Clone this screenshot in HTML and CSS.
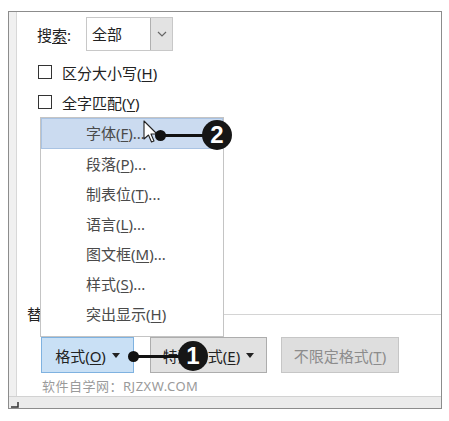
FILE: index.html
```html
<!DOCTYPE html>
<html lang="zh-CN">
<head>
    <meta charset="UTF-8">
    <title>查找和替换</title>
    <link rel="stylesheet" href="styles.css">
</head>
<body>

    <div class="frame">
        <div class="dialog">
            <div class="gutter"></div>
            <div class="content">
                <div class="search-row">
                    <span class="label">搜<u>索</u>:</span>
                    <div class="select">
                        <span class="select__value">全部</span>
                        <span class="select__btn">
                            <svg width="10" height="6" viewBox="0 0 10 6"><path d="M1 1 L5 5 L9 1" fill="none" stroke="#666" stroke-width="1.2"/></svg>
                        </span>
                    </div>
                </div>

                <label class="check-row"><span class="box"></span><span>区分大小写(<u>H</u>)</span></label>
                <label class="check-row"><span class="box"></span><span>全字匹配(<u>Y</u>)</span></label>

                <div class="group-head">
                    <span>替换</span>
                    <span class="group-line"></span>
                </div>

                <div class="btn-row">
                    <button class="btn btn--active"><span>格式(<u>O</u>)</span><span class="caret"></span></button>
                    <button class="btn btn--special"><span>特殊格式(<u>E</u>)</span><span class="caret"></span></button>
                    <button class="btn btn--disabled"><span>不限定格式(<u>T</u>)</span></button>
                </div>

                <div class="watermark">软件自学网：RJZXW.COM</div>
            </div>
        </div>
        <div class="status">
            <svg width="9" height="6" viewBox="0 0 9 6"><path d="M1 5 H8 V0" fill="none" stroke="#333" stroke-width="1.5"/></svg>
        </div>

        <!-- format dropdown menu -->
        <ul class="menu">
            <li class="menu__item menu__item--hover">字体(<u>F</u>)...</li>
            <li class="menu__item">段落(<u>P</u>)...</li>
            <li class="menu__item">制表位(<u>T</u>)...</li>
            <li class="menu__item">语言(<u>L</u>)...</li>
            <li class="menu__item">图文框(<u>M</u>)...</li>
            <li class="menu__item">样式(<u>S</u>)...</li>
            <li class="menu__item">突出显示(<u>H</u>)</li>
        </ul>

        <svg class="cursor" width="16" height="24" viewBox="0 0 16 24">
            <path d="M1 1 L1 19 L5.5 15 L8.5 22 L11 21 L8 14 L14 14 Z" fill="#fff" stroke="#222" stroke-width="1.1" stroke-linejoin="round"/>
        </svg>

        <div class="callout callout--two">
            <span class="callout__dot"></span>
            <span class="callout__line"></span>
            <span class="callout__num">2</span>
        </div>
        <div class="callout callout--one">
            <span class="callout__dot"></span>
            <span class="callout__line"></span>
            <span class="callout__num">1</span>
        </div>
    </div>

</body>
</html>
```

FILE: styles.css
```css
body {
    margin: 0;
    background: #fff;
    font-family: "Noto Sans", "Noto Sans CJK SC", sans-serif;
    font-size: 15px;
    color: #222;
}

u {
    text-underline-offset: 2px;
}

.frame {
    position: relative;
    margin: 11px 0 0 8px;
    width: 432px;
    height: 396px;
    border: 1px solid #8c8c8c;
    display: flex;
    flex-direction: column;
}

.dialog {
    flex: 1;
    display: flex;
}

.gutter {
    width: 7px;
    background: #f0f0f0;
    border-right: 1px solid #d8d8d8;
}

.content {
    flex: 1;
    background: #fff;
    display: flex;
    flex-direction: column;
    padding-left: 20px;
}

.search-row {
    display: flex;
    align-items: center;
    margin-top: 4px;
    height: 36px;
}

.label {
    width: 49px;
}

.select {
    display: flex;
    height: 34px;
    border: 1px solid #c8c8c8;
    box-sizing: border-box;
}

.select__value {
    width: 58px;
    padding-left: 5px;
    line-height: 32px;
}

.select__btn {
    width: 21px;
    background: #e3e3e3;
    border-left: 1px solid #b0b0b0;
    display: flex;
    align-items: center;
    justify-content: center;
}

.check-row {
    display: flex;
    align-items: center;
    height: 30px;
    margin-left: 1px;
}

.search-row + .check-row {
    margin-top: 5px;
}

.box {
    width: 12px;
    height: 12px;
    border: 1px solid #333;
    background: #fff;
    margin-right: 10px;
}

.group-head {
    display: flex;
    align-items: center;
    margin-top: 189px;
    margin-left: -10px;
    height: 16px;
    line-height: 16px;
}

.group-line {
    flex: 1;
    height: 1px;
    background: #d4d4d4;
    margin-left: 6px;
}

.btn-row {
    display: flex;
    margin-top: 15px;
    margin-left: 4px;
    height: 36px;
}

.btn {
    font-family: inherit;
    font-size: 15px;
    color: #222;
    height: 36px;
    padding: 0;
    box-sizing: border-box;
    background: #e1e1e1;
    border: 1px solid #adadad;
    display: flex;
    align-items: center;
    justify-content: center;
    gap: 6px;
}

.btn--active {
    width: 93px;
    background: #c9e0f5;
    border-color: #7fb2e0;
}

.btn--special {
    width: 117px;
    margin-left: 16px;
}

.btn--disabled {
    width: 118px;
    margin-left: 14px;
    background: #dedede;
    border-color: #c6c6c6;
    color: #8c8c8c;
}

.caret {
    width: 0;
    height: 0;
    border-left: 4px solid transparent;
    border-right: 4px solid transparent;
    border-top: 5px solid #222;
}

.watermark {
    margin-top: 5px;
    margin-left: 5px;
    font-size: 13px;
    line-height: 16px;
    color: #9a9a9a;
    letter-spacing: 0.5px;
}

.status {
    height: 11px;
    background: #ebebeb;
    border-top: 1px solid #d2d2d2;
    display: flex;
    align-items: flex-end;
    padding-left: 1px;
}

.menu {
    position: absolute;
    left: 31px;
    top: 105px;
    width: 182px;
    height: 218px;
    margin: 0;
    padding: 0;
    list-style: none;
    background: #fff;
    border: 1px solid #c4c4c4;
}

.menu__item {
    height: 30px;
    line-height: 30px;
    padding-left: 45px;
    color: #4a4a4a;
    box-sizing: border-box;
}

.menu__item--hover {
    background: #cbdbf0;
    border: 1px solid #a9c3e3;
    padding-left: 44px;
    line-height: 28px;
    height: 31px;
}

.cursor {
    position: absolute;
    left: 134px;
    top: 108px;
}

.callout {
    position: absolute;
    display: flex;
    align-items: center;
    height: 30px;
}

.callout--two {
    left: 146px;
    top: 108px;
}

.callout--one {
    left: 119px;
    top: 329px;
}

.callout__dot {
    width: 11px;
    height: 11px;
    border-radius: 50%;
    background: #111;
}

.callout__line {
    height: 3px;
    background: #111;
    margin-left: -2px;
}

.callout--two .callout__line {
    width: 40px;
}

.callout--one .callout__line {
    width: 43px;
}

.callout__num {
    width: 30px;
    height: 30px;
    border-radius: 50%;
    background: #161616;
    color: #fff;
    font-family: "Liberation Sans", sans-serif;
    font-weight: bold;
    font-size: 24px;
    line-height: 30px;
    text-align: center;
    margin-left: -2px;
}
```
